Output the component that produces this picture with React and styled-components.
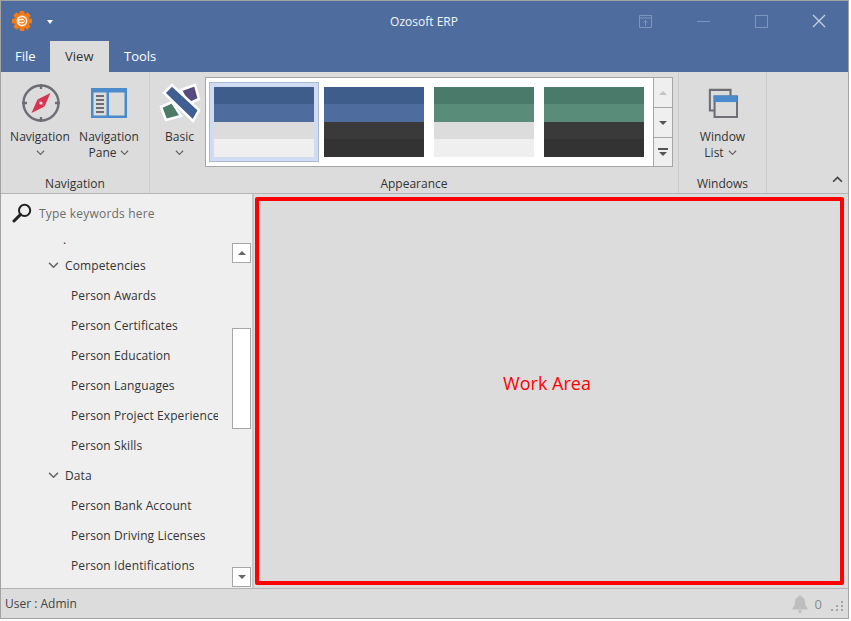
import React from "react";
import styled, { createGlobalStyle } from "styled-components";

const GlobalStyle = createGlobalStyle`
  html, body {
    margin: 0;
    padding: 0;
    background: #ffffff;
  }
  * {
    box-sizing: border-box;
  }
`;

const Window = styled.div`
  width: 849px;
  height: 619px;
  border: 1px solid #a3a3a3;
  display: flex;
  flex-direction: column;
  background: #dcdcdc;
  color: #333333;
  font-family: "Open Sans", "Liberation Sans", sans-serif;
  font-size: 12px;
  overflow: hidden;
`;

const TitleBar = styled.div`
  height: 40px;
  flex: none;
  background: #4e6d9e;
  display: grid;
  grid-template-columns: 1fr 1fr;
  position: relative;
`;

const QuickAccess = styled.div`
  display: flex;
  align-items: center;
  padding-left: 10px;
  gap: 14px;
  height: 40px;
`;

const DropCaret = styled.span`
  width: 0;
  height: 0;
  border-left: 3.5px solid transparent;
  border-right: 3.5px solid transparent;
  border-top: 4px solid #ffffff;
  margin-top: 1px;
`;

const Title = styled.div`
  position: absolute;
  left: 0;
  right: 0;
  top: 0;
  line-height: 42px;
  text-align: center;
  color: #f2f5f9;
  font-size: 12px;
  padding-right: 1px;
`;

const Controls = styled.div`
  display: flex;
  align-items: center;
  justify-content: flex-end;
  height: 40px;
`;

const ControlButton = styled.div`
  width: 58px;
  height: 40px;
  display: flex;
  align-items: center;
  justify-content: center;
`;

const TabBar = styled.div`
  height: 31px;
  flex: none;
  background: #4e6d9e;
  display: flex;
`;

const Tab = styled.div`
  padding: 0 ${(p) => p.$pad}px;
  line-height: 31px;
  font-size: 13px;
  color: ${(p) => (p.$active ? "#333333" : "#ffffff")};
  background: ${(p) => (p.$active ? "#dcdcdc" : "transparent")};
`;

const Ribbon = styled.div`
  height: 122px;
  flex: none;
  display: flex;
  border-bottom: 1px solid #b4b4b4;
  background: #dcdcdc;
`;

const Group = styled.div`
  width: ${(p) => p.$width}px;
  flex: none;
  display: flex;
  flex-direction: column;
  border-right: 1px solid #cbcbcb;
`;

const GroupBody = styled.div`
  flex: 1;
  display: flex;
  padding: 5px 0 0 ${(p) => p.$left || 0}px;
`;

const GroupLabel = styled.div`
  height: 20px;
  padding-top: 2px;
  line-height: 18px;
  text-align: center;
  color: #333333;
`;

const LargeButton = styled.div`
  width: ${(p) => p.$width}px;
  flex: none;
  display: flex;
  flex-direction: column;
  align-items: center;
  line-height: 16px;
  white-space: nowrap;
`;

const IconSlot = styled.div`
  height: 52px;
  display: flex;
  align-items: center;
  justify-content: center;
  padding-left: ${(p) => p.$nudge || 0}px;
`;

const CaptionLine = styled.div`
  height: 16px;
  display: flex;
  align-items: center;
  gap: 4px;
  padding-right: ${(p) => p.$shift || 0}px;
`;

const Gallery = styled.div`
  width: 468px;
  height: 90px;
  display: flex;
  border: 1px solid #a6a6a6;
  background: #ffffff;
`;

const SwatchRow = styled.div`
  flex: 1;
  display: flex;
  gap: 10px;
  padding: 9px 0 0 8px;
`;

const Swatch = styled.div`
  width: 100px;
  height: 70px;
  display: grid;
  grid-template-rows: 17px 18px 17px 18px;
  position: relative;
  outline: ${(p) => (p.$selected ? "4px solid #cfdcf2" : "none")};
  box-shadow: ${(p) => (p.$selected ? "0 0 0 5px #a9b8d0" : "none")};
`;

const Band = styled.div`
  background: ${(p) => p.$color};
`;

const GalleryButtons = styled.div`
  width: 19px;
  flex: none;
  display: grid;
  grid-template-rows: 30px 30px 1fr;
  border-left: 1px solid #a6a6a6;
  background: #efefef;
`;

const GalleryButton = styled.div`
  display: flex;
  flex-direction: column;
  align-items: center;
  justify-content: center;
  gap: 2px;
  border-bottom: ${(p) => (p.$last ? "none" : "1px solid #a6a6a6")};
`;

const Triangle = styled.span`
  width: 0;
  height: 0;
  border-left: 4px solid transparent;
  border-right: 4px solid transparent;
  ${(p) =>
    p.$up
      ? `border-bottom: 4px solid ${p.$color};`
      : `border-top: 4px solid ${p.$color};`}
`;

const Bar = styled.span`
  width: 10px;
  height: 2px;
  background: #555555;
`;

const RibbonEnd = styled.div`
  flex: 1;
  display: flex;
  align-items: flex-end;
  justify-content: flex-end;
  padding: 0 5px 10px 0;
`;

const Main = styled.div`
  flex: 1;
  min-height: 0;
  display: flex;
`;

const NavPane = styled.div`
  width: 251px;
  flex: none;
  background: #efefef;
  display: flex;
  flex-direction: column;
  position: relative;
  overflow: hidden;
  letter-spacing: 0.1px;
`;

const SearchRow = styled.div`
  height: 38px;
  flex: none;
  display: flex;
  align-items: center;
  gap: 7px;
  padding-left: 11px;
  color: #6d6d6d;
  letter-spacing: 0.2px;
`;

const Tree = styled.div`
  width: 217px;
  overflow: hidden;
  white-space: nowrap;
`;

const Stub = styled.div`
  height: 18px;
  line-height: 15px;
  padding-left: 62px;
`;

const FolderRow = styled.div`
  height: 30px;
  display: flex;
  align-items: center;
  gap: 6px;
  padding-left: 47px;
`;

const LeafRow = styled.div`
  height: 30px;
  line-height: 32px;
  padding-left: 70px;
`;

const ScrollButton = styled.div`
  position: absolute;
  right: 1px;
  top: ${(p) => p.$top}px;
  width: 19px;
  height: 20px;
  background: #ffffff;
  border: 1px solid #a6a6a6;
  display: flex;
  align-items: center;
  justify-content: center;
`;

const ScrollThumb = styled.div`
  position: absolute;
  right: 1px;
  top: 134px;
  width: 19px;
  height: 101px;
  background: #ffffff;
  border: 1px solid #a6a6a6;
`;

const WorkWrap = styled.div`
  flex: 1;
  border-left: 2px solid #c8c8c8;
  padding: 3px 4px 3px 1px;
  display: flex;
`;

const WorkArea = styled.div`
  flex: 1;
  border: 4px solid #ff0000;
  border-radius: 2px;
  display: flex;
  align-items: center;
  justify-content: center;
  padding: 0 5px 16px 0;
  color: #ff0000;
  font-size: 18px;
`;

const StatusBar = styled.div`
  height: 30px;
  flex: none;
  border-top: 1px solid #b4b4b4;
  display: flex;
  align-items: center;
  justify-content: space-between;
  padding: 0 4px;
  color: #444444;
`;

const StatusRight = styled.div`
  display: flex;
  align-items: center;
  gap: 7px;
  color: #8a8a8a;
  font-size: 13px;
`;

const Grip = styled.svg`
  display: block;
  margin: 5px 0 0 2px;
`;

function Chevron({ up, size = 9, color = "#666666", weight = 1.3 }) {
  return (
    <svg width={size} height={size * 0.6} viewBox="0 0 10 6">
      <path
        d={up ? "M1 5.2 5 1.2 9 5.2" : "M1 .8 5 4.8 9 .8"}
        fill="none"
        stroke={color}
        strokeWidth={weight}
      />
    </svg>
  );
}

function AppIcon() {
  const teeth = [0, 45, 90, 135, 180, 225, 270, 315];
  return (
    <svg width="22" height="22" viewBox="0 0 22 22">
      {teeth.map((a) => (
        <rect
          key={a}
          x="8.5"
          y="1"
          width="5"
          height="5"
          rx="1"
          fill="#f77a12"
          transform={`rotate(${a} 11 11)`}
        />
      ))}
      <circle cx="11" cy="11" r="7.6" fill="#f77a12" />
      <circle cx="11" cy="11" r="5.4" fill="#fdf1e4" />
      <path
        d="M8.6 8.9a3.2 3.2 0 1 1 0 4.2M8.4 11H13"
        fill="none"
        stroke="#f77a12"
        strokeWidth="1.3"
      />
    </svg>
  );
}

function CompassIcon() {
  return (
    <svg width="40" height="40" viewBox="0 0 40 40">
      <circle cx="20" cy="20" r="17.5" fill="none" stroke="#6d6d75" strokeWidth="2.4" />
      <path d="M20 1v5M20 34v5M1 20h5M34 20h5" stroke="#6d6d75" strokeWidth="2.4" />
      <path d="M29.5 10 23.5 23.5 16.5 16.5Z" fill="#d8334f" />
      <path d="M10.5 30 16.5 16.5 23.5 23.5Z" fill="#d8334f" />
      <circle cx="20" cy="20" r="1.6" fill="#f4d9dd" />
    </svg>
  );
}

function PaneIcon() {
  return (
    <svg width="36" height="30" viewBox="0 0 36 30">
      <rect width="36" height="30" fill="#4c8bcb" />
      <rect x="2.5" y="4.5" width="13" height="23" fill="#dcdcdc" />
      <rect x="18" y="4.5" width="15.5" height="23" fill="#dcdcdc" />
      <path d="M5 8h8M5 12h8M5 16h8M5 20h8M5 24h8" stroke="#6d6d75" strokeWidth="2" />
    </svg>
  );
}

function BasicIcon() {
  return (
    <svg width="42" height="40" viewBox="0 0 42 40">
      <g stroke="#ffffff" strokeWidth="2.5">
        <path d="M22 7 36 2 40 16 29 21Z" fill="#574a7e" />
        <path d="M2 24 13 19 22 33 7 37Z" fill="#4c7b68" />
        <path d="M5 10 13 2 40 27 34 38Z" fill="#3f5f92" />
      </g>
    </svg>
  );
}

function WindowListIcon() {
  return (
    <svg width="30" height="30" viewBox="0 0 32 32">
      <path d="M8 24H2V2h22v8" fill="none" stroke="#6d6d75" strokeWidth="2.2" />
      <rect x="7" y="9" width="24" height="22" fill="#dcdcdc" stroke="#6d6d75" strokeWidth="2.2" />
      <rect x="6" y="8" width="25" height="7" fill="#4c8bcb" />
    </svg>
  );
}

function SearchIcon() {
  return (
    <svg width="20" height="20" viewBox="0 0 20 20">
      <circle cx="12.6" cy="7.4" r="5.6" fill="none" stroke="#222222" strokeWidth="2" />
      <path d="M8.4 11.6 2 18" stroke="#222222" strokeWidth="3" strokeLinecap="round" />
    </svg>
  );
}

function BellIcon() {
  return (
    <svg width="16" height="18" viewBox="0 0 16 18">
      <path
        d="M8 .5c.9 0 1.400.6 1.500 1.300 2.400.7 3.500 2.700 3.500 5.200 0 3 1 4.600 2.500 6.200v1.300H.5v-1.300C2 11.600 3 10 3 7c0-2.500 1.100-4.500 3.500-5.200C6.600 1.100 7.100.5 8 .5Z"
        fill="#bdbdbd"
      />
      <circle cx="8" cy="16.5" r="1.5" fill="#bdbdbd" />
    </svg>
  );
}

const themes = [
  ["#3e5d8b", "#4e6d9e", "#dcdcdc", "#efefef"],
  ["#3e5d8b", "#4e6d9e", "#3a3a3a", "#333333"],
  ["#4a7a69", "#5a8c7a", "#dcdcdc", "#efefef"],
  ["#4a7a69", "#5a8c7a", "#3a3a3a", "#333333"],
];

const competencies = [
  "Person Awards",
  "Person Certificates",
  "Person Education",
  "Person Languages",
  "Person Project Experience",
  "Person Skills",
];

const dataItems = [
  "Person Bank Account",
  "Person Driving Licenses",
  "Person Identifications",
];

export default function App() {
  return (
    <>
      <GlobalStyle />
      <Window>
        <TitleBar>
          <QuickAccess>
            <AppIcon />
            <DropCaret />
          </QuickAccess>
          <Title>Ozosoft ERP</Title>
          <Controls>
            <ControlButton>
              <svg width="13" height="13" viewBox="0 0 13 13">
                <path
                  d="M.5.5h12v12H.5zM.5 3h12M6.5 11V5.500M4.500 7.500l2-2 2 2"
                  fill="none"
                  stroke="#7d96bb"
                />
              </svg>
            </ControlButton>
            <ControlButton>
              <svg width="13" height="13" viewBox="0 0 13 13">
                <path d="M0 6.5h13" stroke="#7d96bb" />
              </svg>
            </ControlButton>
            <ControlButton>
              <svg width="13" height="13" viewBox="0 0 13 13">
                <rect x=".5" y=".5" width="12" height="12" fill="none" stroke="#7d96bb" />
              </svg>
            </ControlButton>
            <ControlButton>
              <svg width="14" height="14" viewBox="0 0 14 14">
                <path d="M1 1l12 12M13 1 1 13" stroke="#c5d1e2" strokeWidth="1.3" />
              </svg>
            </ControlButton>
          </Controls>
        </TitleBar>

        <TabBar>
          <Tab $pad={14}>File</Tab>
          <Tab $pad={15.5} $active>View</Tab>
          <Tab $pad={15}>Tools</Tab>
        </TabBar>

        <Ribbon>
          <Group $width={149}>
            <GroupBody $left={4}>
              <LargeButton $width={70}>
                <IconSlot $nudge={2}>
                  <CompassIcon />
                </IconSlot>
                <CaptionLine>Navigation</CaptionLine>
                <CaptionLine>
                  <Chevron />
                </CaptionLine>
              </LargeButton>
              <LargeButton $width={68}>
                <IconSlot>
                  <PaneIcon />
                </IconSlot>
                <CaptionLine>Navigation</CaptionLine>
                <CaptionLine>
                  Pane <Chevron />
                </CaptionLine>
              </LargeButton>
            </GroupBody>
            <GroupLabel>Navigation</GroupLabel>
          </Group>

          <Group $width={529}>
            <GroupBody $left={4}>
              <LargeButton $width={51}>
                <IconSlot>
                  <BasicIcon />
                </IconSlot>
                <CaptionLine>Basic</CaptionLine>
                <CaptionLine>
                  <Chevron />
                </CaptionLine>
              </LargeButton>
              <Gallery>
                <SwatchRow>
                  {themes.map((bands, i) => (
                    <Swatch key={i} $selected={i === 0}>
                      {bands.map((c) => (
                        <Band key={c} $color={c} />
                      ))}
                    </Swatch>
                  ))}
                </SwatchRow>
                <GalleryButtons>
                  <GalleryButton>
                    <Triangle $up $color="#c4c4c4" />
                  </GalleryButton>
                  <GalleryButton>
                    <Triangle $color="#555555" />
                  </GalleryButton>
                  <GalleryButton $last>
                    <Bar />
                    <Triangle $color="#555555" />
                  </GalleryButton>
                </GalleryButtons>
              </Gallery>
            </GroupBody>
            <GroupLabel>Appearance</GroupLabel>
          </Group>

          <Group $width={88}>
            <GroupBody>
              <LargeButton $width={87}>
                <IconSlot>
                  <WindowListIcon />
                </IconSlot>
                <CaptionLine>Window</CaptionLine>
                <CaptionLine $shift={4}>
                  List <Chevron />
                </CaptionLine>
              </LargeButton>
            </GroupBody>
            <GroupLabel>Windows</GroupLabel>
          </Group>

          <RibbonEnd>
            <Chevron up size={11} color="#444444" weight={1.5} />
          </RibbonEnd>
        </Ribbon>

        <Main>
          <NavPane>
            <SearchRow>
              <SearchIcon />
              Type keywords here
            </SearchRow>
            <Tree>
              <Stub>.</Stub>
              <FolderRow>
                <Chevron size={11} />
                Competencies
              </FolderRow>
              {competencies.map((name) => (
                <LeafRow key={name}>{name}</LeafRow>
              ))}
              <FolderRow>
                <Chevron size={11} />
                Data
              </FolderRow>
              {dataItems.map((name) => (
                <LeafRow key={name}>{name}</LeafRow>
              ))}
            </Tree>
            <ScrollButton $top={49}>
              <Triangle $up $color="#666666" />
            </ScrollButton>
            <ScrollThumb />
            <ScrollButton $top={373}>
              <Triangle $color="#666666" />
            </ScrollButton>
          </NavPane>
          <WorkWrap>
            <WorkArea>Work Area</WorkArea>
          </WorkWrap>
        </Main>

        <StatusBar>
          <span>User : Admin</span>
          <StatusRight>
            <BellIcon />
            <span>0</span>
            <Grip width="13" height="11" viewBox="0 0 13 11">
              <path
                d="M10 0h2v2h-2zM5 4h2v2H5zM10 4h2v2h-2zM0 8h2v2H0zM5 8h2v2H5zM10 8h2v2h-2z"
                fill="#a5a5a5"
              />
            </Grip>
          </StatusRight>
        </StatusBar>
      </Window>
    </>
  );
}
